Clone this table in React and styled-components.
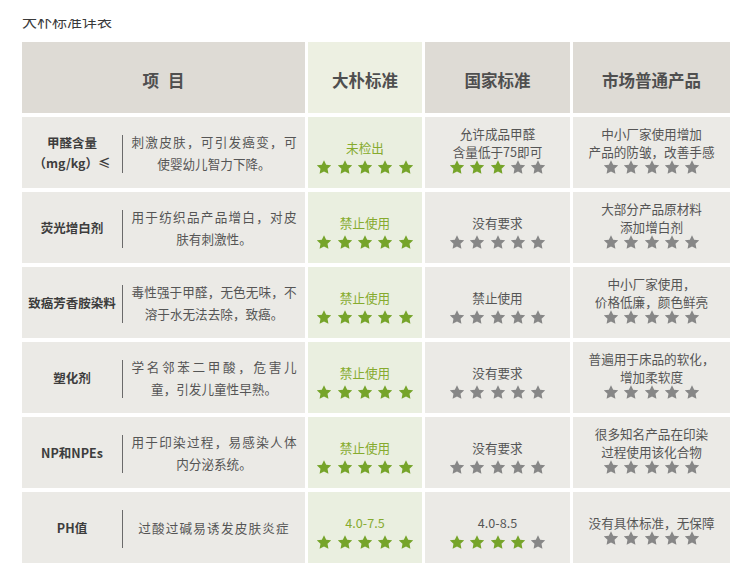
import React from "react";
import styled, { createGlobalStyle } from "styled-components";

const Global = createGlobalStyle`
  html, body { margin: 0; padding: 0; background: #ffffff; }
  body { font-family: "Noto Sans", "Noto Sans CJK SC", sans-serif; color: #555; }
`;

const Page = styled.div`
  width: 740px;
  height: 571px;
  overflow: hidden;
  padding-left: 22px;
  box-sizing: border-box;
`;

const TitleClip = styled.div`
  margin-top: 19px;
  height: 11px;
  overflow: hidden;
`;

const Title = styled.div`
  margin-top: -5.6px;
  font-size: 15px;
  line-height: 15px;
  color: #3a3a3a;
  font-family: "Noto Sans CJK SC", sans-serif;
`;

const Table = styled.div`
  margin-top: 12px;
  display: grid;
  grid-template-columns: 283px 114px 145px 157px;
  grid-auto-rows: 71px;
  column-gap: 3px;
  row-gap: 4px;
`;

const HeadCell = styled.div`
  background: ${(p) => (p.$green ? "#edf0e2" : "#dedbd5")};
  display: flex;
  align-items: center;
  justify-content: center;
  gap: ${(p) => (p.$spaced ? "9px" : "0")};
  padding-top: 4px;
  box-sizing: border-box;
  font-size: 16.5px;
  font-weight: 700;
  color: #4f4f4f;
  font-family: "Noto Sans CJK SC", sans-serif;
`;

const ItemCell = styled.div`
  background: #ebeae6;
  display: grid;
  grid-template-columns: 100px 1px 1fr;
  align-items: center;
`;

const Name = styled.div`
  text-align: center;
  font-size: 12.5px;
  font-weight: 700;
  line-height: 20px;
  color: #3d3d3d;
  font-family: "Noto Sans CJK SC", sans-serif;
  padding-top: 1px;
`;

const Divider = styled.div`
  width: 1px;
  height: 38px;
  background: #6a6a6a;
  margin-top: 2px;
`;

const Desc = styled.div`
  width: 165px;
  justify-self: center;
  font-size: 12.6px;
  line-height: 22px;
  color: #555;
  font-family: "Noto Sans CJK SC", sans-serif;
  padding-top: 1px;
`;

const DescLine = styled.div`
  text-align: ${(p) => (p.$justify ? "justify" : "center")};
  text-align-last: ${(p) => (p.$justify ? "justify" : "center")};
  letter-spacing: ${(p) => (p.$spread ? "1.2px" : "0")};
`;

const ValueCell = styled.div`
  background: ${(p) => (p.$green ? "#eaefe0" : "#ebeae6")};
  display: flex;
  flex-direction: column;
  align-items: center;
  justify-content: flex-end;
  padding-bottom: ${(p) => (p.$lift ? 18 : 14)}px;
  box-sizing: border-box;
`;

const ValueText = styled.div`
  font-size: 12.6px;
  line-height: 17.5px;
  text-align: center;
  white-space: nowrap;
  color: ${(p) => (p.$green ? "#86ab2e" : "#555")};
  font-family: "Noto Sans CJK SC", sans-serif;
  margin-bottom: ${(p) => (p.$single ? 4 : 0)}px;
`;

const StarRow = styled.div`
  display: flex;
  gap: 6.4px;
  height: 14px;
`;

const StarSvg = styled.svg`
  display: block;
  width: 14px;
  height: 14px;
`;

const starPoints = (() => {
  const pts = [];
  for (let i = 0; i < 10; i++) {
    const r = i % 2 === 0 ? 7.5 : 3.7;
    const a = (-90 + i * 36) * (Math.PI / 180);
    pts.push(`${(7 + r * Math.cos(a)).toFixed(2)},${(7.7 + r * Math.sin(a)).toFixed(2)}`);
  }
  return pts.join(" ");
})();

const Star = ({ on }) => (
  <StarSvg viewBox="0 0 14 14">
    <polygon points={starPoints} fill={on ? "#76a42a" : "#878787"} />
  </StarSvg>
);

const Stars = ({ green }) => (
  <StarRow>
    {[0, 1, 2, 3, 4].map((i) => (
      <Star key={i} on={i < green} />
    ))}
  </StarRow>
);

const rows = [
  {
    name: ["甲醛含量", "（mg/kg）≤"],
    desc: ["刺激皮肤，可引发癌变，可", "使婴幼儿智力下降。"],
    ours: "未检出",
    nat: { text: ["允许成品甲醛", "含量低于75即可"], stars: 3 },
    mkt: { text: ["中小厂家使用增加", "产品的防皱，改善手感"] },
  },
  {
    name: ["荧光增白剂"],
    desc: ["用于纺织品产品增白，对皮", "肤有刺激性。"],
    ours: "禁止使用",
    nat: { text: ["没有要求"], stars: 0 },
    mkt: { text: ["大部分产品原材料", "添加增白剂"] },
  },
  {
    name: ["致癌芳香胺染料"],
    desc: ["毒性强于甲醛，无色无味，不", "溶于水无法去除，致癌。"],
    ours: "禁止使用",
    nat: { text: ["禁止使用"], stars: 0 },
    mkt: { text: ["中小厂家使用，", "价格低廉，颜色鲜亮"] },
  },
  {
    name: ["塑化剂"],
    desc: ["学名邻苯二甲酸，危害儿", "童，引发儿童性早熟。"],
    ours: "禁止使用",
    nat: { text: ["没有要求"], stars: 0 },
    mkt: { text: ["普遍用于床品的软化，", "增加柔软度"] },
  },
  {
    name: ["NP和NPEs"],
    desc: ["用于印染过程，易感染人体", "内分泌系统。"],
    ours: "禁止使用",
    nat: { text: ["没有要求"], stars: 0 },
    mkt: { text: ["很多知名产品在印染", "过程使用该化合物"] },
  },
  {
    name: ["PH值"],
    desc: ["过酸过碱易诱发皮肤炎症"],
    spread: true,
    ours: "4.0-7.5",
    nat: { text: ["4.0-8.5"], stars: 4 },
    mkt: { text: ["没有具体标准，无保障"], lift: true },
  },
];

const Values = ({ lines, green, stars, lift }) => (
  <ValueCell $green={green} $lift={lift}>
    <ValueText $green={green} $single={lines.length === 1 && !lift}>
      {lines.map((l, i) => (
        <div key={i}>{l}</div>
      ))}
    </ValueText>
    <Stars green={stars} />
  </ValueCell>
);

export default function App() {
  return (
    <Page>
      <Global />
      <TitleClip>
        <Title>大朴标准详表</Title>
      </TitleClip>
      <Table>
        <HeadCell $spaced>
          <span>项</span>
          <span>目</span>
        </HeadCell>
        <HeadCell $green>大朴标准</HeadCell>
        <HeadCell>国家标准</HeadCell>
        <HeadCell>市场普通产品</HeadCell>
        {rows.map((r, i) => (
          <React.Fragment key={i}>
            <ItemCell>
              <Name>
                {r.name.map((n, j) => (
                  <div key={j}>{n}</div>
                ))}
              </Name>
              <Divider />
              <Desc>
                {r.desc.map((d, j) => (
                  <DescLine
                    key={j}
                    $justify={r.desc.length > 1 && j < r.desc.length - 1}
                    $spread={r.spread}
                  >
                    {d}
                  </DescLine>
                ))}
              </Desc>
            </ItemCell>
            <Values lines={[r.ours]} green stars={5} />
            <Values lines={r.nat.text} stars={r.nat.stars} />
            <Values lines={r.mkt.text} stars={0} lift={r.mkt.lift} />
          </React.Fragment>
        ))}
      </Table>
    </Page>
  );
}
